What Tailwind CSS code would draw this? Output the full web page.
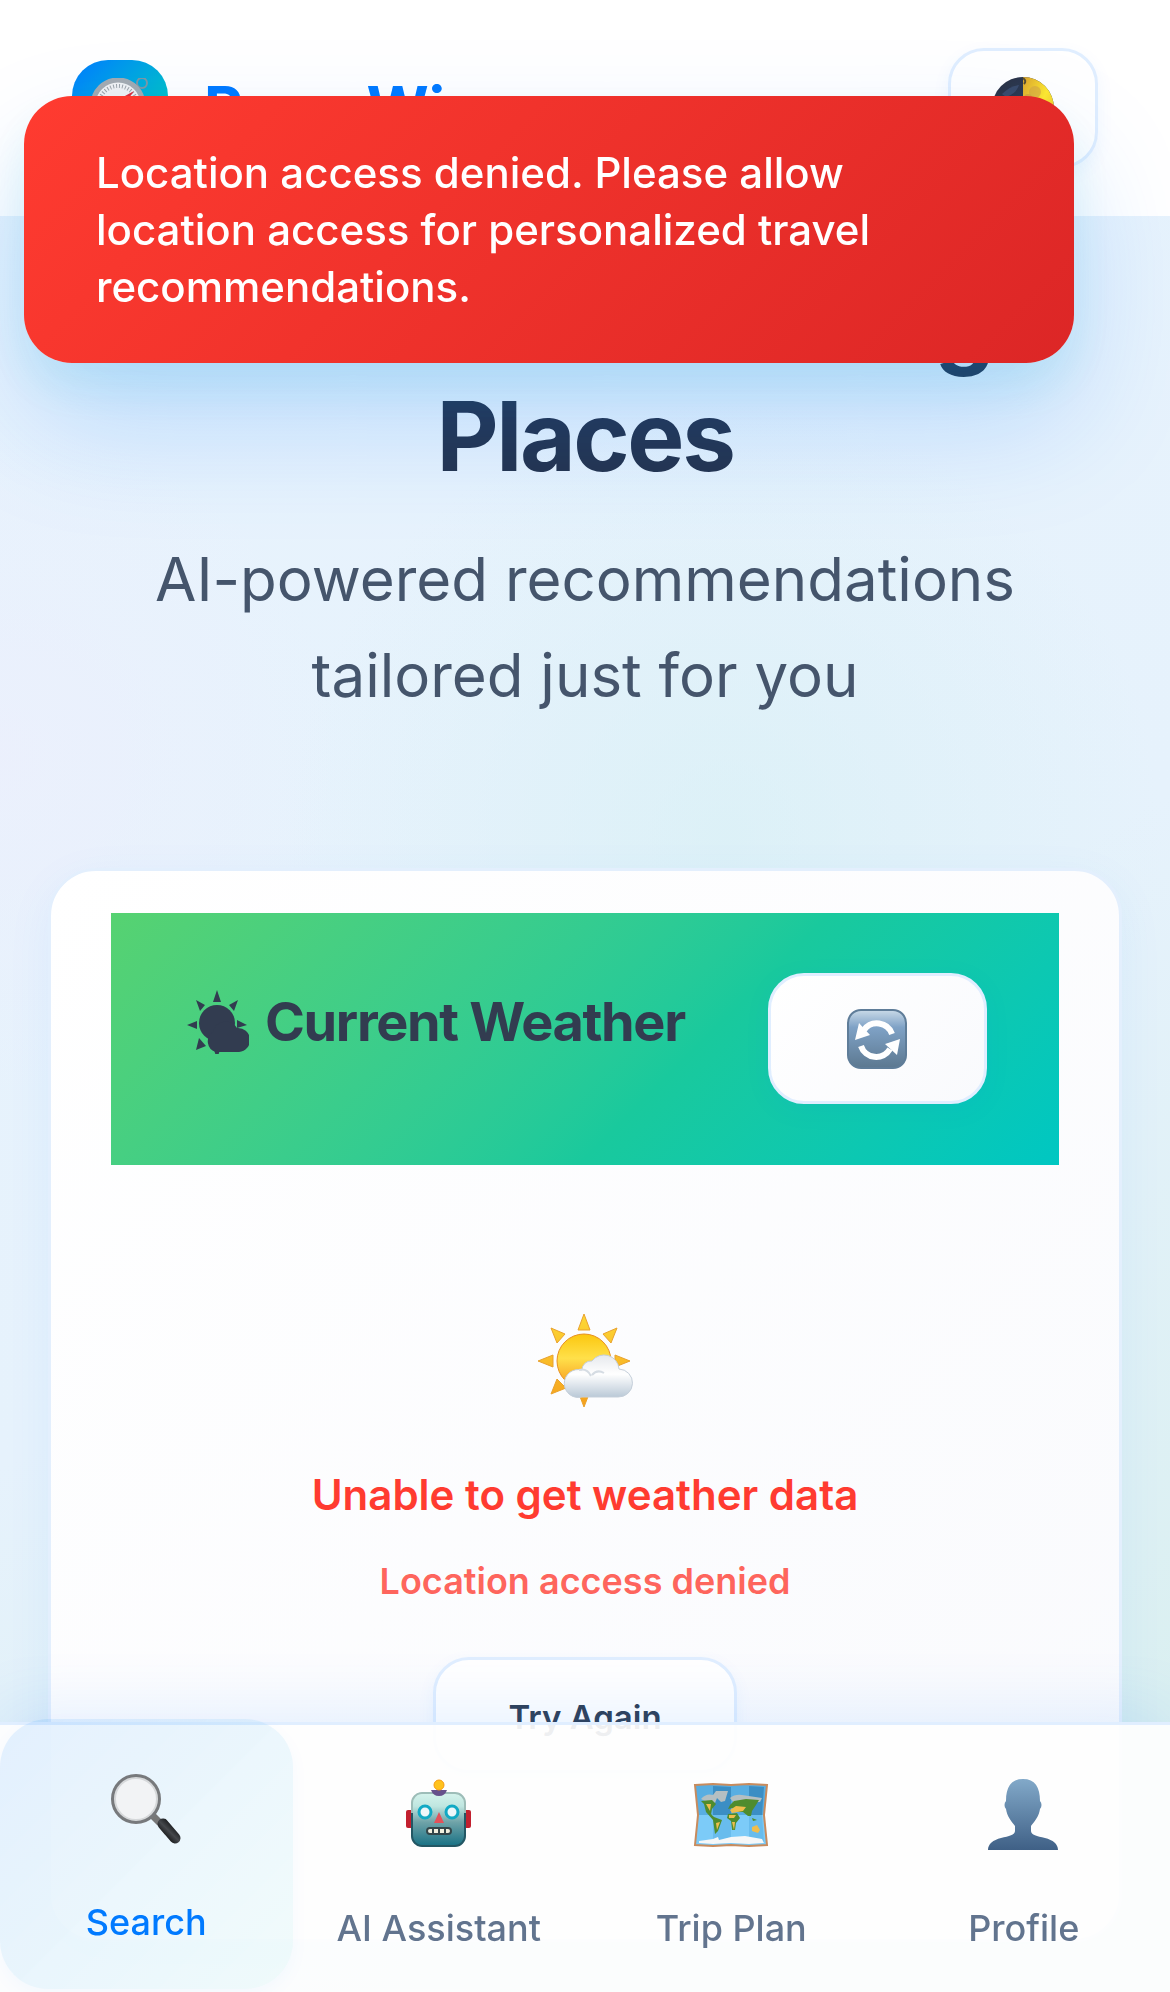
<!DOCTYPE html>
<html lang="en">
<head>
<meta charset="utf-8">
<meta name="viewport" content="width=device-width, initial-scale=1">
<title>RoamWise</title>
<script src="https://cdn.jsdelivr.net/npm/@tailwindcss/browser@4"></script>
</head>
<body class="min-h-screen overflow-x-hidden font-['Inter',sans-serif] text-slate-800 bg-[radial-gradient(circle_at_0%_38%,rgba(238,238,252,0.6),transparent_20%),radial-gradient(circle_at_62%_42%,rgba(216,240,245,0.7),transparent_32%),linear-gradient(150deg,#e8f3fd_0%,#e6f2fc_55%,#d8efef_95%)]">

<header class="flex h-[216px] items-center justify-between bg-white px-[72px]">
  <a href="#" class="flex items-center gap-9">
    <span class="flex size-24 items-center justify-center rounded-[36px] bg-linear-135 from-[#007aff] to-[#00c7be] to-80%">
      <svg class="size-[60px]" viewBox="0 0 60 60" aria-hidden="true">
        <circle cx="52" cy="5" r="5" fill="none" stroke="#7d97a5" stroke-width="2"/>
        <path d="m44 13 4-5" stroke="#8b969d" stroke-width="4"/>
        <circle cx="28" cy="27" r="25" fill="#f1f2f3" stroke="#a4aab0" stroke-width="5"/>
        <circle cx="28" cy="27" r="19" fill="none" stroke="#9da3a8" stroke-width="4" stroke-dasharray="1 2"/>
        <path d="M44 13 31 31 24 24Z" fill="#e02a38"/><path d="M12 43 31 31 24 24Z" fill="#fff" stroke="#999"/>
      </svg>
    </span>
    <span class="text-[60px] leading-[72px] font-bold text-[#007aff]">RoamWise</span>
  </a>
  <button type="button" aria-label="Toggle theme" class="flex h-[120px] w-[150px] items-center justify-center rounded-[36px] border-3 border-[#e0eeff] bg-white shadow-[0_6px_18px_rgba(0,122,255,0.06)]">
    <svg class="size-[62px]" viewBox="0 0 62 62" aria-hidden="true">
      <defs>
        <linearGradient id="moon" x1="0" y1="0" x2="1" y2="1"><stop offset="0" stop-color="#dca52c"/><stop offset=".5" stop-color="#ffe92e"/><stop offset="1" stop-color="#e8b02a"/></linearGradient>
        <linearGradient id="dark" x1="0" y1="0" x2="1" y2="1"><stop offset="0" stop-color="#2a3040"/><stop offset="1" stop-color="#2f456d"/></linearGradient>
      </defs>
      <circle cx="31" cy="31" r="31" fill="url(#dark)"/>
      <path d="M31 0a31 31 0 0 1 0 62Z" fill="url(#moon)"/>
      <path d="M31 1q4 3 1 6" fill="none" stroke="#574d30" stroke-width="2"/>
      <circle cx="43" cy="15" r="6" fill="#d3a443" opacity=".6"/><circle cx="36" cy="21" r="4" fill="#c99b3d" opacity=".6"/>
      <path d="M10 17q8-8 17-9-3 9-13 12Z" fill="#43597f" opacity=".6"/>
    </svg>
  </button>
</header>

<main class="px-12 pb-[50px]">
  <section class="pt-12 text-center">
    <h1 class="mx-auto max-w-[930px] text-[96px] leading-[115px] font-bold tracking-tight text-[#25334d]">Discover Amazing Places</h1>
    <p class="mx-auto mt-[37px] max-w-[900px] text-[60px] leading-[96px] text-slate-600">AI-powered recommendations tailored just for you</p>
  </section>

  <section class="mt-[145px] rounded-[48px] border-3 border-[#e3effd] bg-linear-135 from-white to-[#f9fafd] px-[60px] pt-[42px] pb-[166px] shadow-[0_12px_48px_rgba(0,122,255,0.06)]">
    <div class="flex h-[252px] items-start justify-between bg-linear-135 from-[#56d271] via-[#19c99d] via-60% to-[#00c7c2] px-[72px] pt-[60px]">
      <h2 class="flex h-24 items-center gap-4 text-[54px] leading-[65px] font-bold tracking-tight text-[#323c50]">
        <svg class="size-[66px]" viewBox="0 0 66 66" fill="currentColor" aria-hidden="true">
          <path d="m34 2 4 12h-8ZM13 12l9 5-5 6ZM55 12l-9 5 5 6ZM4 37l10-4v8ZM64 37l-10-5v8ZM13 62l3-12 7 8ZM34 71l-3-9h6Z"/>
          <circle cx="34" cy="35" r="18"/><path d="M33 64a11 11 0 0 1-3-20 13 13 0 0 1 24-4 11 11 0 0 1 2 24Z"/>
        </svg>
        Current Weather
      </h2>
      <button type="button" aria-label="Refresh weather" class="flex h-[131px] w-[219px] items-center justify-center rounded-[36px] border-3 border-[#e0eeff] bg-linear-135 from-white to-[#f9fafd] shadow-[0_6px_24px_rgba(0,122,255,0.08)]">
        <svg class="size-[60px] overflow-visible" viewBox="1 0 60 60" aria-hidden="true">
          <defs><linearGradient id="rf" x2="0" y2="1"><stop stop-color="#c9dae8"/><stop offset=".3" stop-color="#7fa2c6"/><stop offset="1" stop-color="#5c7890"/></linearGradient></defs>
          <rect x="1" y="1" width="58" height="58" rx="13" fill="url(#rf)" stroke="#5f7d99" stroke-width="2"/>
          <path d="M45 25A16 16 0 0 0 17 21M14 37a16 16 0 0 0 29 3" fill="none" stroke="#fff" stroke-width="6"/>
          <path d="M12 14 8 31l15-5ZM53 30l-15 5 12 11Z" fill="#fff"/>
        </svg>
      </button>
    </div>

    <div class="flex flex-col items-center pt-[143px] text-center">
      <svg class="h-[108px] w-24 overflow-visible" viewBox="0 0 96 108" aria-hidden="true">
        <defs>
          <linearGradient id="sun" x2="0" y2="1"><stop stop-color="#fbc70f"/><stop offset=".45" stop-color="#ffe04a"/><stop offset="1" stop-color="#f6951d"/></linearGradient>
          <linearGradient id="ray" x2="0" y2="1"><stop stop-color="#fdd835"/><stop offset="1" stop-color="#f5a01c"/></linearGradient>
          <linearGradient id="cl" x2="0" y2="1"><stop stop-color="#e6e9ed"/><stop offset=".45" stop-color="#fff"/><stop offset="1" stop-color="#b9c8d6"/></linearGradient>
        </defs>
        <path d="m47 6 6 16H41ZM14 20l14 6-8 9ZM80 20l-14 6 8 9ZM1 53l15-6v12ZM93 53l-15-6v12ZM14 86l6-15 9 9ZM47 99l-5-13h10Z" fill="url(#ray)" stroke="#e9a22e"/>
        <circle cx="47" cy="53" r="27" fill="url(#sun)" stroke="#e79020"/>
        <path d="M45 89a14 14 0 1 1 0-27 9 9 0 0 1 10-9 15 15 0 0 1 27 8 14 14 0 0 1-1 28Z" fill="url(#cl)" stroke="#c5cfda"/>
        <path d="M42 62q8-2 12 6M55 67q5-6 12-2" fill="none" stroke="#d5dce3" stroke-width="2"/>
      </svg>
      <p class="mt-[45px] text-[42px] leading-[67px] font-semibold text-[#ff3b30]">Unable to get weather data</p>
      <p class="mt-6 text-[36px] leading-[58px] font-semibold text-[#ff3b30]/80">Location access denied</p>
      <button type="button" class="mt-[47px] h-[116px] rounded-[36px] border-3 border-[#e0eeff] bg-white px-[72px] pt-1 text-[33px] leading-[40px] font-semibold text-slate-700 shadow-[0_6px_18px_rgba(0,122,255,0.06)]">Try Again</button>
    </div>
  </section>
</main>

<div role="alert" class="fixed top-24 left-6 w-[calc(100%-120px)] max-w-[1050px] rounded-[48px] bg-linear-135 from-[#ff3b30] to-[#dc2626] px-[72px] py-12 text-[42px] leading-[57px] font-medium text-white shadow-[0_60px_120px_rgba(0,122,255,0.2),0_24px_48px_rgba(0,199,190,0.1)]">Location access denied. Please allow location access for personalized travel recommendations.</div>

<nav aria-label="Main" class="fixed inset-x-0 bottom-0 grid h-[270px] grid-cols-4 border-t-3 border-[#e0eeff] bg-[#fefefe]/92 text-[36px] leading-[44px] font-medium text-slate-500 shadow-[0_-12px_60px_rgba(0,122,255,0.1)]">
  <a href="#" aria-current="page" class="-mt-[6px] flex h-[270px] flex-col items-center rounded-[48px] bg-linear-135 from-[#007aff]/10 to-[#00c7be]/5 pt-12 text-[#007aff] shadow-[0_6px_18px_rgba(0,122,255,0.04)]">
    <svg class="h-[96px] w-[78px]" viewBox="0 0 78 96" aria-hidden="true">
      <defs><linearGradient id="hd" gradientUnits="userSpaceOnUse" x1="68" y1="56" x2="54" y2="70"><stop stop-color="#08090b"/><stop offset=".5" stop-color="#45484c"/><stop offset="1" stop-color="#050505"/></linearGradient></defs>
      <path d="m44 47 9 9" stroke="#777" stroke-width="7"/>
      <path d="m56 57 12 14" stroke="url(#hd)" stroke-width="11" stroke-linecap="round"/>
      <circle cx="29" cy="32" r="23" fill="#f2f3f5" stroke="#77797c" stroke-width="4"/>
      <circle cx="29" cy="32" r="21" fill="none" stroke="#d6d8da" stroke-width="2"/>
    </svg>
    <span class="mt-[37px]">Search</span>
  </a>
  <a href="#" class="flex flex-col items-center pt-12">
    <svg class="h-[96px] w-[78px]" viewBox="0 0 78 96" aria-hidden="true">
      <defs><linearGradient id="rb" x2="0" y2="1"><stop stop-color="#d5f3ec"/><stop offset=".25" stop-color="#bfe6e0"/><stop offset=".55" stop-color="#6fa3a8"/><stop offset="1" stop-color="#187184"/></linearGradient></defs>
      <rect x="6" y="37" width="7" height="18" rx="2" fill="#c2202f"/><rect x="64" y="37" width="7" height="18" rx="2" fill="#c2202f"/>
      <rect x="12" y="20" width="53" height="53" rx="10" fill="url(#rb)"/>
      <path d="M12 40v23a10 10 0 0 0 10 10h33a10 10 0 0 0 10-10V40" fill="none" stroke="#235764" stroke-width="2"/>
      <path d="M12 40V30a10 10 0 0 1 10-10h33a10 10 0 0 1 10 10v10" fill="none" stroke="#9dbdb8" stroke-width="2"/>
      <path d="M31 17h16q-2 6-8 6t-8-6Z" fill="#66518b"/><circle cx="39" cy="12" r="5" fill="#ffc21c" stroke="#f59a12"/>
      <circle cx="25" cy="39" r="6" fill="#eef7fa" stroke="#12a9c4" stroke-width="3"/><circle cx="52" cy="39" r="6" fill="#eef7fa" stroke="#12a9c4" stroke-width="3"/>
      <path d="m39 39 5 11H34Z" fill="#e4515a"/>
      <rect x="27" y="55" width="24" height="6" rx="3" fill="#f2f0df" stroke="#34464a" stroke-width="2"/><path d="M33 55v6m6-6v6m6-6v6" stroke="#34464a" stroke-width="2"/>
    </svg>
    <span class="mt-[37px]">AI Assistant</span>
  </a>
  <a href="#" class="flex flex-col items-center pt-12">
    <svg class="h-[96px] w-[78px]" viewBox="0 0 78 96" aria-hidden="true">
      <defs><linearGradient id="sea" x2="0" y2="1"><stop offset=".5" stop-color="#58aee2"/><stop offset=".5" stop-color="#7ccbf8"/></linearGradient></defs>
      <path d="m3 12 18-1 18 1 18-1 18 1-3 30 3 30-18 1-18-1-18 1-18-1 3-30Z" fill="url(#sea)" stroke="#c88b5d" stroke-width="2"/>
      <path d="m21 13 18 1v28H21ZM57 13l15 1-2 28H57Z" fill="#2c7db3" opacity=".65"/><path d="m21 42h18v28l-18 1ZM57 42h13l2 28-15 1Z" fill="#4ba6dc" opacity=".4"/>
      <path d="M9 26q5-6 12-4l3-4 12 0-3 10-4 1-4-4-2 5-8-1ZM38 25q5-4 12-3l20 3-2 4-26 1Z" fill="#b4bfc2"/>
      <path d="M9 28l11-1 4 4-4 5-1 5 3 3 8 3-4 11-3 3-2-14-7-8-2-8ZM38 32l4-4 12-2 13 1-3 5-4 6-1 5-3 0-5-4-4 0-7-4-4 1ZM36 41l9-1 3 5-4 5-1 7h-3l-1-9-4-3ZM60 45l5 2-4 1Z" fill="#4f8c2e"/>
      <path d="m38 37 6-4 10 1-3 4-11 2ZM14 31l5 0-1 7ZM37 42l7 0-2 3-5 0ZM24 50l4-1-3 8ZM40 49h3l-1 8ZM60 54l5-2 3 5-2 3-6-2Z" fill="#f0bd4c"/>
      <path d="m7 68 14-2 5-2 1 3 12-3 14-1 17 3 2 4-15 1-18-1-18 1-14-1Z" fill="#f5f7f8"/>
    </svg>
    <span class="mt-[37px]">Trip Plan</span>
  </a>
  <a href="#" class="flex flex-col items-center pt-12">
    <svg class="h-[96px] w-[78px]" viewBox="0 0 78 96" aria-hidden="true">
      <defs><linearGradient id="pf" x2="0" y2="1"><stop stop-color="#82a9c9"/><stop offset="1" stop-color="#3f6086"/></linearGradient></defs>
      <path d="M38 6c12 0 17 8 17 22 2 2 2 6 0 8-1 7-5 12-9 17v5c0 4 6 5 14 7 8 2 13 6 13 12H3c0-6 5-10 13-12 8-2 14-3 14-7v-5c-4-5-8-10-9-17-2-2-2-6 0-8 0-14 5-22 17-22Z" fill="url(#pf)"/>
    </svg>
    <span class="mt-[37px]">Profile</span>
  </a>
</nav>
</body>
</html>
